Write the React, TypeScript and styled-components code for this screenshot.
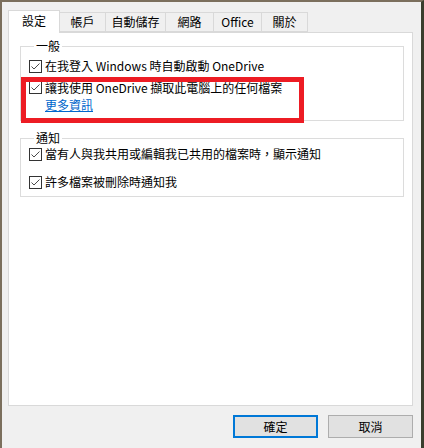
import React from "react";
import styled, { createGlobalStyle } from "styled-components";

const FONT = `"Noto Sans CJK TC", "Noto Sans", sans-serif`;

const Global = createGlobalStyle`
  html, body { margin: 0; padding: 0; background: #f0f0f0; }
  body { font-family: ${FONT}; font-size: 12px; color: #000; }
`;

const Window = styled.div`
  box-sizing: border-box;
  width: 424px;
  height: 448px;
  border-top: 2px solid #7b6f5d;
  border-left: 2px solid #7b6f5d;
  border-right: 3px solid #3a3d2d;
  background: #f0f0f0;
  display: flex;
  flex-direction: column;
  padding: 8px 8px 0 6px;
`;

const TabStrip = styled.div`
  display: flex;
  align-items: flex-end;
  height: 22px;
`;

const Tab = styled.div<{ $w: number; $active?: boolean }>`
  box-sizing: border-box;
  width: ${(p) => p.$w}px;
  height: ${(p) => (p.$active ? 23 : 20)}px;
  margin-bottom: ${(p) => (p.$active ? -1 : 0)}px;
  margin-left: -1px;
  &:first-child { margin-left: 0; }
  border: 1px solid #d9d9d9;
  border-bottom: ${(p) => (p.$active ? "none" : "1px solid #d9d9d9")};
  background: ${(p) => (p.$active ? "#fff" : "#f0f0f0")};
  position: relative;
  z-index: ${(p) => (p.$active ? 2 : 1)};
  display: flex;
  align-items: center;
  justify-content: center;
  padding-bottom: ${(p) => (p.$active ? 2 : 0)}px;
  line-height: 14px;
  white-space: nowrap;
`;

const Pane = styled.div`
  box-sizing: border-box;
  position: relative;
  height: 374px;
  border: 1px solid #d9d9d9;
  background: #fff;
  padding: 7px 8px 0 11px;
  display: flex;
  flex-direction: column;
`;

const Group = styled.fieldset<{ $mt?: number; $pb: number }>`
  margin: ${(p) => p.$mt ?? 0}px 0 0 0;
  padding: 0 8px ${(p) => p.$pb}px 8px;
  border: 1px solid #dcdcdc;
  min-width: 0;
`;

const Legend = styled.legend`
  margin-left: 5px;
  padding: 0 2px;
  line-height: 12px;
  font-size: 12px;
`;

const Row = styled.div<{ $mt: number }>`
  display: flex;
  align-items: flex-start;
  gap: 3px;
  margin-top: ${(p) => p.$mt}px;
`;

const Box = styled.span<{ $top: number }>`
  box-sizing: border-box;
  flex: none;
  width: 13px;
  height: 13px;
  margin-top: ${(p) => p.$top}px;
  border: 1px solid #333;
  background: #fff;
  display: flex;
  align-items: center;
  justify-content: center;
`;

const TextCol = styled.div<{ $lh: number }>`
  display: flex;
  flex-direction: column;
  line-height: ${(p) => p.$lh}px;
  white-space: nowrap;
`;

const MoreLink = styled.a`
  color: #0066cc;
  text-decoration: underline;
  cursor: pointer;
`;

const Highlight = styled.div`
  position: absolute;
  left: 12px;
  top: 44px;
  width: 283px;
  height: 46px;
  box-sizing: border-box;
  border: 5px solid #ed1c24;
  pointer-events: none;
`;

const ButtonRow = styled.div`
  display: flex;
  justify-content: flex-end;
  gap: 10px;
  margin-top: 9px;
`;

const Button = styled.button<{ $default?: boolean }>`
  box-sizing: border-box;
  width: 85px;
  height: 23px;
  background: #e1e1e1;
  border: ${(p) => (p.$default ? "2px solid #0078d7" : "1px solid #adadad")};
  font-family: ${FONT};
  font-size: 12px;
  color: #000;
  padding: 0;
  line-height: 14px;
`;

const Check = ({ top }: { top: number }) => (
  <Box $top={top}>
    <svg width="11" height="11" viewBox="0 0 11 11">
      <path d="M1.5 5.5 L4 8 L9.5 2.5" fill="none" stroke="#4a4a4a" strokeWidth="1" />
    </svg>
  </Box>
);

const tabs: { label: string; w: number; active?: boolean }[] = [
  { label: "設定", w: 52, active: true },
  { label: "帳戶", w: 47 },
  { label: "自動儲存", w: 61 },
  { label: "網路", w: 49 },
  { label: "Office", w: 49 },
  { label: "關於", w: 47 },
];

export default function App() {
  return (
    <>
      <Global />
      <Window>
        <TabStrip>
          {tabs.map((t) => (
            <Tab key={t.label} $w={t.w} $active={t.active}>
              {t.label}
            </Tab>
          ))}
        </TabStrip>
        <Pane>
          <Group $pb={7}>
            <Legend>一般</Legend>
            <Row $mt={4}>
              <Check top={4} />
              <TextCol $lh={20}>在我登入 Windows 時自動啟動 OneDrive</TextCol>
            </Row>
            <Row $mt={3}>
              <Check top={2} />
              <TextCol $lh={17}>
                <span>讓我使用 OneDrive 擷取此電腦上的任何檔案</span>
                <span>
                  <MoreLink>更多資訊</MoreLink>
                </span>
              </TextCol>
            </Row>
          </Group>
          <Group $mt={11} $pb={4}>
            <Legend>通知</Legend>
            <Row $mt={0}>
              <Check top={4} />
              <TextCol $lh={20}>當有人與我共用或編輯我已共用的檔案時，顯示通知</TextCol>
            </Row>
            <Row $mt={8}>
              <Check top={4} />
              <TextCol $lh={20}>許多檔案被刪除時通知我</TextCol>
            </Row>
          </Group>
          <Highlight />
        </Pane>
        <ButtonRow>
          <Button $default>確定</Button>
          <Button>取消</Button>
        </ButtonRow>
      </Window>
    </>
  );
}
